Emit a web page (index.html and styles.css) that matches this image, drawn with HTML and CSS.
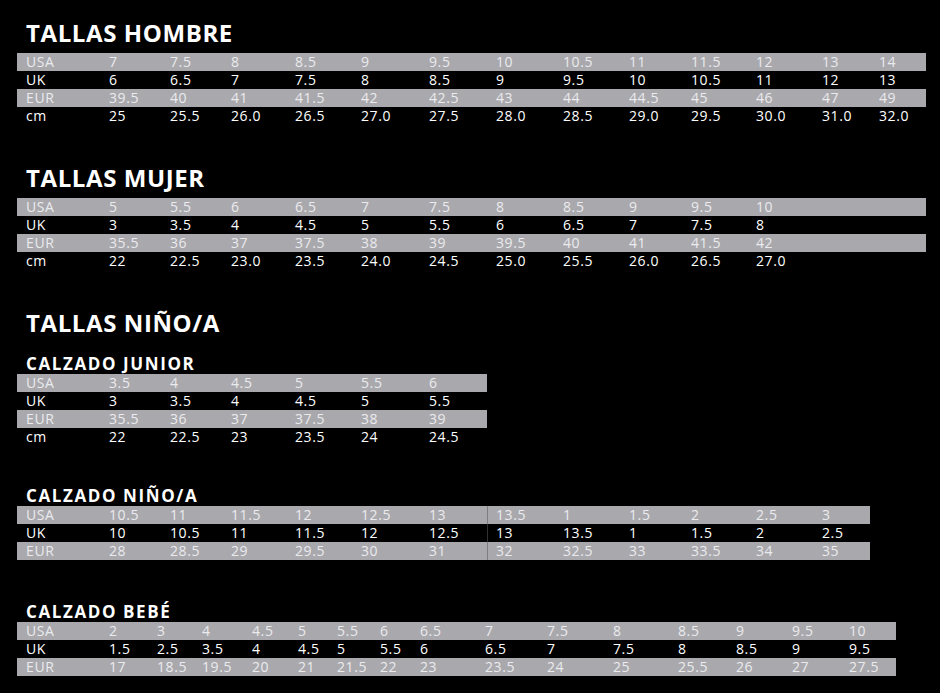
FILE: index.html
```html
<!DOCTYPE html>
<html lang="es">
<head>
<meta charset="utf-8">
<title>Guía de tallas</title>
<link rel="stylesheet" href="styles.css">
</head>
<body>
<main class="page">
  <section class="block">
    <h2 class="title">TALLAS HOMBRE</h2>
    <div class="chart chart-adult">
      <div class="row band"><span>USA</span><span>7</span><span>7.5</span><span>8</span><span>8.5</span><span>9</span><span>9.5</span><span>10</span><span>10.5</span><span>11</span><span>11.5</span><span>12</span><span>13</span><span>14</span></div>
      <div class="row"><span>UK</span><span>6</span><span>6.5</span><span>7</span><span>7.5</span><span>8</span><span>8.5</span><span>9</span><span>9.5</span><span>10</span><span>10.5</span><span>11</span><span>12</span><span>13</span></div>
      <div class="row band"><span>EUR</span><span>39.5</span><span>40</span><span>41</span><span>41.5</span><span>42</span><span>42.5</span><span>43</span><span>44</span><span>44.5</span><span>45</span><span>46</span><span>47</span><span>49</span></div>
      <div class="row"><span>cm</span><span>25</span><span>25.5</span><span>26.0</span><span>26.5</span><span>27.0</span><span>27.5</span><span>28.0</span><span>28.5</span><span>29.0</span><span>29.5</span><span>30.0</span><span>31.0</span><span>32.0</span></div>
    </div>
  </section>

  <section class="block">
    <h2 class="title">TALLAS MUJER</h2>
    <div class="chart chart-adult">
      <div class="row band"><span>USA</span><span>5</span><span>5.5</span><span>6</span><span>6.5</span><span>7</span><span>7.5</span><span>8</span><span>8.5</span><span>9</span><span>9.5</span><span>10</span><span></span><span></span></div>
      <div class="row"><span>UK</span><span>3</span><span>3.5</span><span>4</span><span>4.5</span><span>5</span><span>5.5</span><span>6</span><span>6.5</span><span>7</span><span>7.5</span><span>8</span><span></span><span></span></div>
      <div class="row band"><span>EUR</span><span>35.5</span><span>36</span><span>37</span><span>37.5</span><span>38</span><span>39</span><span>39.5</span><span>40</span><span>41</span><span>41.5</span><span>42</span><span></span><span></span></div>
      <div class="row"><span>cm</span><span>22</span><span>22.5</span><span>23.0</span><span>23.5</span><span>24.0</span><span>24.5</span><span>25.0</span><span>25.5</span><span>26.0</span><span>26.5</span><span>27.0</span><span></span><span></span></div>
    </div>
  </section>

  <section class="block">
    <h2 class="title">TALLAS NIÑO/A</h2>
    <h3 class="subtitle subtitle-first">CALZADO JUNIOR</h3>
    <div class="chart chart-junior">
      <div class="row band"><span>USA</span><span>3.5</span><span>4</span><span>4.5</span><span>5</span><span>5.5</span><span>6</span></div>
      <div class="row"><span>UK</span><span>3</span><span>3.5</span><span>4</span><span>4.5</span><span>5</span><span>5.5</span></div>
      <div class="row band"><span>EUR</span><span>35.5</span><span>36</span><span>37</span><span>37.5</span><span>38</span><span>39</span></div>
      <div class="row"><span>cm</span><span>22</span><span>22.5</span><span>23</span><span>23.5</span><span>24</span><span>24.5</span></div>
    </div>
  </section>

  <section class="block">
    <h3 class="subtitle">CALZADO NIÑO/A</h3>
    <div class="chart chart-kids">
      <div class="row band"><span>USA</span><span>10.5</span><span>11</span><span>11.5</span><span>12</span><span>12.5</span><span>13</span><span class="split">13.5</span><span>1</span><span>1.5</span><span>2</span><span>2.5</span><span>3</span></div>
      <div class="row"><span>UK</span><span>10</span><span>10.5</span><span>11</span><span>11.5</span><span>12</span><span>12.5</span><span class="split">13</span><span>13.5</span><span>1</span><span>1.5</span><span>2</span><span>2.5</span></div>
      <div class="row band"><span>EUR</span><span>28</span><span>28.5</span><span>29</span><span>29.5</span><span>30</span><span>31</span><span class="split">32</span><span>32.5</span><span>33</span><span>33.5</span><span>34</span><span>35</span></div>
    </div>
  </section>

  <section class="block block-baby">
    <h3 class="subtitle">CALZADO BEBÉ</h3>
    <div class="chart chart-baby">
      <div class="row band"><span>USA</span><span>2</span><span>3</span><span>4</span><span>4.5</span><span>5</span><span>5.5</span><span>6</span><span>6.5</span><span>7</span><span>7.5</span><span>8</span><span>8.5</span><span>9</span><span>9.5</span><span>10</span></div>
      <div class="row"><span>UK</span><span>1.5</span><span>2.5</span><span>3.5</span><span>4</span><span>4.5</span><span>5</span><span>5.5</span><span>6</span><span>6.5</span><span>7</span><span>7.5</span><span>8</span><span>8.5</span><span>9</span><span>9.5</span></div>
      <div class="row band"><span>EUR</span><span>17</span><span>18.5</span><span>19.5</span><span>20</span><span>21</span><span>21.5</span><span>22</span><span>23</span><span>23.5</span><span>24</span><span>25</span><span>25.5</span><span>26</span><span>27</span><span>27.5</span></div>
    </div>
  </section>
</main>
</body>
</html>
```

FILE: styles.css
```css
html, body {
  margin: 0;
  padding: 0;
  background: #000;
}

body {
  width: 940px;
  height: 693px;
  overflow: hidden;
  color: #fff;
  font-family: "Open Sans", "Liberation Sans", sans-serif;
}

.page {
  padding: 21px 0 0 17px;
}

.block {
  margin-top: 41px;
}

.block:first-child {
  margin-top: 0;
}

.block-baby {
  margin-top: 43px;
}

.title {
  margin: 0 0 8px 9px;
  font-size: 24px;
  line-height: 24px;
  font-weight: 700;
  letter-spacing: 0.6px;
}

.subtitle {
  margin: 0 0 2px 9px;
  font-size: 17px;
  line-height: 17px;
  font-weight: 700;
  letter-spacing: 1.6px;
}

.subtitle-first {
  margin-top: 20px;
}

.chart {
  width: max-content;
}

.chart-adult {
  --cols: 83px 61px 61px 64px 66px 68px 67px 67px 66px 62px 65px 66px 57px 56px;
}

.chart-junior {
  --cols: 83px 61px 61px 64px 66px 68px 67px;
}

.chart-kids {
  --cols: 83px 61px 61px 64px 66px 68px 67px 67px 66px 62px 65px 66px 57px;
}

.chart-baby {
  --cols: 83px 48px 45px 50px 46px 39px 43px 40px 65px 62px 66px 65px 58px 56px 57px 56px;
}

.row {
  display: grid;
  grid-template-columns: var(--cols);
  height: 18px;
  font-size: 14px;
  line-height: 18px;
  letter-spacing: 0.6px;
  color: #fff;
}

.row span {
  padding-left: 9px;
  white-space: nowrap;
}

.band {
  background: #a9a8ad;
  color: #ebebed;
}

.split {
  box-shadow: inset 1px 0 0 rgba(90, 90, 95, 0.55);
}
```
